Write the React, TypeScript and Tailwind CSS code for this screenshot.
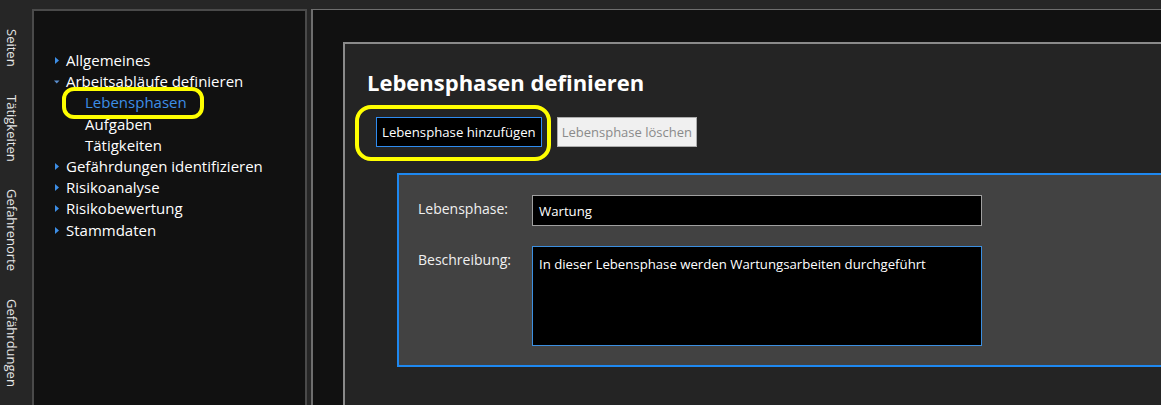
import React from "react";

const tabs = ["Seiten", "Tätigkeiten", "Gefahrenorte", "Gefährdungen"];

type Node = { label: string; open?: boolean; active?: boolean; children?: Node[] };

const tree: Node[] = [
  { label: "Allgemeines" },
  {
    label: "Arbeitsabläufe definieren",
    open: true,
    children: [{ label: "Lebensphasen", active: true }, { label: "Aufgaben" }, { label: "Tätigkeiten" }],
  },
  { label: "Gefährdungen identifizieren" },
  { label: "Risikoanalyse" },
  { label: "Risikobewertung" },
  { label: "Stammdaten" },
];

function Arrow({ open }: { open?: boolean }) {
  if (open) {
    return (
      <svg width="13" height="21" viewBox="0 0 13 21" className="shrink-0">
        <path d="M1 9.5 L6.5 9.5 L3.75 12.5 Z" fill="#5b8fd0" />
      </svg>
    );
  }
  return (
    <svg width="13" height="21" viewBox="0 0 13 21" className="shrink-0">
      <path d="M2 7 L6 10.5 L2 14 Z" fill="#3d8ee6" />
    </svg>
  );
}

export default function App() {
  return (
    <div
      className="w-[1161px] h-[405px] overflow-hidden bg-[#262626] flex"
      style={{ fontFamily: '"Open Sans", "Noto Sans", sans-serif' }}
    >
      {/* vertical tabs */}
      <div className="w-[32px] shrink-0 flex flex-col items-start pt-[29px] pl-[5px] gap-[28px] text-[13px] text-[#e6e6e6]">
        {tabs.map((t) => (
          <div key={t} className="[writing-mode:vertical-rl] leading-[14px]">
            {t}
          </div>
        ))}
      </div>

      {/* tree sidebar */}
      <div className="mt-[9px] w-[275px] shrink-0 bg-[#111111] border-l-2 border-t-2 border-r-2 border-[#4a4a4a] pt-[39px] pl-[19px] text-[15px] text-white relative">
        {tree.map((n) => (
          <div key={n.label}>
            <div className="flex items-center h-[21.2px] leading-[21px]">
              <Arrow open={n.open} />
              <span>{n.label}</span>
            </div>
            {n.open &&
              n.children?.map((c) => (
                <div key={c.label} className="relative flex items-center h-[21.2px] leading-[21px] pl-[32px]">
                  <span className={c.active ? "text-[#3d8ee6]" : ""}>{c.label}</span>
                  {c.active && (
                    <div className="absolute left-[9px] top-[-5px] w-[142px] h-[32px] border-[4px] border-[#ffff00] rounded-[12px]" />
                  )}
                </div>
              ))}
          </div>
        ))}
      </div>

      {/* main */}
      <div className="mt-[9px] ml-[4px] flex-1 min-w-0 bg-[#111111] border-l-2 border-t border-[#6e6e6e] pl-[30px] pt-[32px]">
        <div className="h-full bg-[#242424] border-l-2 border-t-2 border-[#8a8a8a] pl-[22px] pt-[22px] overflow-hidden">
          <h1 className="text-[22px] font-bold text-white leading-[32px]">Lebensphasen definieren</h1>
          <div className="flex items-center gap-[15px] mt-[19px] pl-[9px]">
            <div className="relative">
              <button className="h-[30px] px-[5px] bg-black border border-[#2f8cf0] text-white text-[13.2px] leading-[28px]">
                Lebensphase hinzufügen
              </button>
              <div className="absolute left-[-21px] top-[-12px] w-[196px] h-[56px] border-[4px] border-[#ffff00] rounded-[16px]" />
            </div>
            <button className="h-[30px] px-[4px] bg-[#f0f0f0] border border-[#adadad] text-[#8a8a8a] text-[13px] leading-[28px]">
              Lebensphase löschen
            </button>
          </div>
          <div className="mt-[26px] ml-[30px] w-[800px] h-[194px] bg-[#424242] border-2 border-[#1e88f0] pl-[19px] pt-[20px]">
            <div className="flex">
              <div className="w-[114px] text-[14px] text-[#f0f0f0] pt-[3px]">Lebensphase:</div>
              <div className="w-[450px] h-[31px] bg-black border border-[#a0a0a0] px-[6px] pt-[6px] text-[13.2px] text-white">
                Wartung
              </div>
            </div>
            <div className="flex mt-[20px]">
              <div className="w-[114px] text-[14px] text-[#f0f0f0] pt-[3px]">Beschreibung:</div>
              <div className="w-[450px] h-[100px] bg-black border border-[#3c8fe0] px-[6px] pt-[8px] text-[13.2px] text-white">
                In dieser Lebensphase werden Wartungsarbeiten durchgeführt
              </div>
            </div>
          </div>
        </div>
      </div>
    </div>
  );
}
